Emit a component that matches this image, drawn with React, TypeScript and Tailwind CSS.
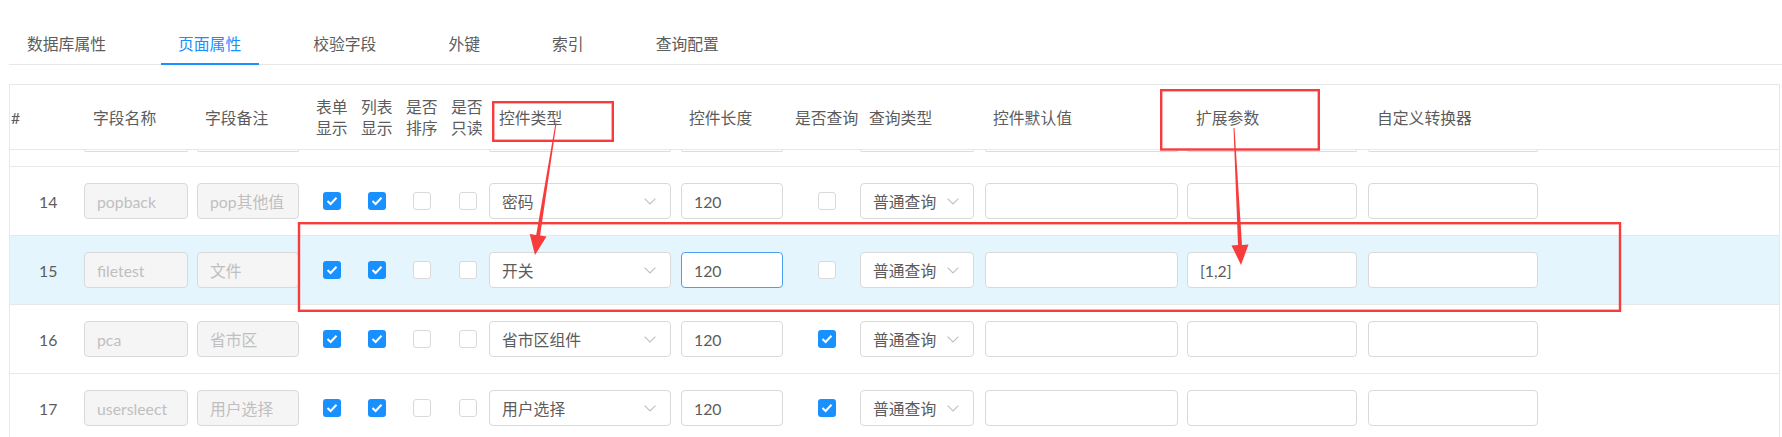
import React from "react";

const W = [
  "w-[69px]",
  "w-[114px]",
  "w-[116px]",
  "w-[45px]",
  "w-[45px]",
  "w-[45px]",
  "w-[40px]",
  "w-[192px]",
  "w-[112px]",
  "w-[67px]",
  "w-[125px]",
  "w-[202px]",
  "w-[181px]",
];

function Check({ on }: { on: boolean }) {
  return on ? (
    <div className="w-[18px] h-[18px] rounded-[3px] bg-[#1890ff] flex items-center justify-center">
      <svg width="12" height="10" viewBox="0 0 12 10">
        <polyline points="1.5,5 4.6,8 10.5,1.8" fill="none" stroke="#fff" strokeWidth="2" />
      </svg>
    </div>
  ) : (
    <div className="w-[18px] h-[18px] rounded-[3px] bg-white border border-[#d9d9d9]" />
  );
}

function Chevron() {
  return (
    <svg width="12" height="7" viewBox="0 0 12 7" className="shrink-0">
      <polyline points="0.6,0.6 6,6 11.4,0.6" fill="none" stroke="#bfbfbf" strokeWidth="1.1" />
    </svg>
  );
}

function Box({
  w,
  text,
  disabled,
  focused,
}: {
  w: string;
  text?: string;
  disabled?: boolean;
  focused?: boolean;
}) {
  const base = "h-[36px] rounded-[4px] border pl-[12px] flex items-center whitespace-nowrap overflow-hidden";
  const look = disabled
    ? "bg-[#f5f5f5] border-[#d9d9d9] text-[#bfbfbf]"
    : focused
    ? "bg-white border-[#4a9ff5] text-[#5c5c5c]"
    : "bg-white border-[#d9d9d9] text-[#5c5c5c]";
  return <div className={`${base} ${look} ${w}`}>{text}</div>;
}

function Select({ w, text }: { w: string; text: string }) {
  return (
    <div className={`h-[36px] rounded-[4px] border border-[#d9d9d9] bg-white pl-[12px] pr-[14px] flex items-center justify-between text-[#5c5c5c] whitespace-nowrap ${w}`}>
      <span>{text}</span>
      <Chevron />
    </div>
  );
}

type RowData = {
  n: number;
  name: string;
  remark: string;
  type: string;
  query: boolean;
  ext?: string;
  focused?: boolean;
  hl?: boolean;
};

function DataRow({ d }: { d: RowData }) {
  return (
    <div className={`flex h-[69px] border-b border-[#e8e8e8] items-center ${d.hl ? "bg-[#e4f5fd]" : "bg-white"}`}>
      <div className={`${W[0]} shrink-0 pl-[29px] text-[#5c5c5c]`}>{d.n}</div>
      <div className={`${W[1]} shrink-0 pl-[5px]`}>
        <Box w="w-[104px]" text={d.name} disabled />
      </div>
      <div className={`${W[2]} shrink-0 pl-[4px]`}>
        <Box w="w-[102px]" text={d.remark} disabled />
      </div>
      <div className={`${W[3]} shrink-0 pl-[14px]`}>
        <Check on />
      </div>
      <div className={`${W[4]} shrink-0 pl-[14px]`}>
        <Check on />
      </div>
      <div className={`${W[5]} shrink-0 pl-[14px]`}>
        <Check on={false} />
      </div>
      <div className={`${W[6]} shrink-0 pl-[15px]`}>
        <Check on={false} />
      </div>
      <div className={`${W[7]} shrink-0 pl-[5px]`}>
        <Select w="w-[182px]" text={d.type} />
      </div>
      <div className={`${W[8]} shrink-0 pl-[5px]`}>
        <Box w="w-[102px]" text="120" focused={d.focused} />
      </div>
      <div className={`${W[9]} shrink-0 pl-[30px]`}>
        <Check on={d.query} />
      </div>
      <div className={`${W[10]} shrink-0 pl-[5px]`}>
        <Select w="w-[114px]" text="普通查询" />
      </div>
      <div className={`${W[11]} shrink-0 pl-[5px]`}>
        <Box w="w-[193px]" />
      </div>
      <div className={`${W[12]} shrink-0 pl-[5px]`}>
        <Box w="w-[170px]" text={d.ext} />
      </div>
      <div className="flex-1 pl-[5px]">
        <Box w="w-[170px]" />
      </div>
    </div>
  );
}

function Peek({ w }: { w: string }) {
  return <div className={`h-[2px] border-b border-x border-[#dcdcdc] rounded-b-[4px] ${w}`} />;
}

function arrow(sx: number, sy: number, tx: number, ty: number) {
  const dx = tx - sx;
  const dy = ty - sy;
  const L = Math.hypot(dx, dy);
  const ux = dx / L;
  const uy = dy / L;
  const nx = -uy;
  const ny = ux;
  const h = 20;
  const bx = tx - ux * h;
  const by = ty - uy * h;
  const pts: [number, number][] = [
    [sx + nx * 0.5, sy + ny * 0.5],
    [bx + nx * 2, by + ny * 2],
    [bx + nx * 8.5, by + ny * 8.5],
    [tx, ty],
    [bx - nx * 8.5, by - ny * 8.5],
    [bx - nx * 2, by - ny * 2],
    [sx - nx * 0.5, sy - ny * 0.5],
  ];
  return pts.map((p) => `${p[0].toFixed(1)},${p[1].toFixed(1)}`).join(" ");
}

const rows: RowData[] = [
  { n: 14, name: "popback", remark: "pop其他值", type: "密码", query: false },
  { n: 15, name: "filetest", remark: "文件", type: "开关", query: false, ext: "[1,2]", focused: true, hl: true },
  { n: 16, name: "pca", remark: "省市区", type: "省市区组件", query: true },
  { n: 17, name: "usersleect", remark: "用户选择", type: "用户选择", query: true },
];

export default function App() {
  const tabs = ["数据库属性", "页面属性", "校验字段", "外键", "索引", "查询配置"];
  return (
    <div
      className="relative w-[1782px] h-[437px] overflow-hidden bg-white text-[15.8px] leading-[21px]"
      style={{ fontFamily: 'Lato, "Noto Sans CJK SC", sans-serif' }}
    >
      {/* tabs */}
      <div className="ml-[9px] h-[65px] flex border-b border-[#e8e8e8] pl-[0.5px]">
        {tabs.map((t, i) => (
          <div
            key={t}
            className={`relative h-[64px] pt-[22px] px-[17.5px] mr-[37px] flex items-center whitespace-nowrap ${
              i === 1 ? "text-[#1890ff]" : "text-[#5c5c5c]"
            }`}
          >
            {t}
            {i === 1 && <div className="absolute left-0 right-0 bottom-[-1px] h-[2.5px] bg-[#1890ff]" />}
          </div>
        ))}
      </div>

      {/* table */}
      <div className="mt-[19px] ml-[9px] w-[1771px] border-l border-t border-r border-[#e8e8e8]">
        {/* header */}
        <div className="flex h-[65px] border-b border-[#e8e8e8] items-center text-[#5c5c5c] whitespace-nowrap">
          <div className={`${W[0]} shrink-0 pl-[1px]`}>#</div>
          <div className={`${W[1]} shrink-0 pl-[14px]`}>字段名称</div>
          <div className={`${W[2]} shrink-0 pl-[12px]`}>字段备注</div>
          <div className={`${W[3]} shrink-0 pl-[7px]`}>
            表单
            <br />
            显示
          </div>
          <div className={`${W[4]} shrink-0 pl-[7px]`}>
            列表
            <br />
            显示
          </div>
          <div className={`${W[5]} shrink-0 pl-[7px]`}>
            是否
            <br />
            排序
          </div>
          <div className={`${W[6]} shrink-0 pl-[7px]`}>
            是否
            <br />
            只读
          </div>
          <div className={`${W[7]} shrink-0 pl-[15px]`}>控件类型</div>
          <div className={`${W[8]} shrink-0 pl-[13px]`}>控件长度</div>
          <div className={`${W[9]} shrink-0 pl-[7px]`}>是否查询</div>
          <div className={`${W[10]} shrink-0 pl-[14px]`}>查询类型</div>
          <div className={`${W[11]} shrink-0 pl-[13px]`}>控件默认值</div>
          <div className={`${W[12]} shrink-0 pl-[14px]`}>扩展参数</div>
          <div className="flex-1 pl-[14px]">自定义转换器</div>
        </div>

        {/* row 13 scrolled under header */}
        <div className="flex h-[17px] border-b border-[#e8e8e8] items-start">
          <div className={`${W[0]} shrink-0`} />
          <div className={`${W[1]} shrink-0 pl-[5px]`}>
            <Peek w="w-[104px]" />
          </div>
          <div className={`${W[2]} shrink-0 pl-[4px]`}>
            <Peek w="w-[102px]" />
          </div>
          <div className={`${W[3]} shrink-0`} />
          <div className={`${W[4]} shrink-0`} />
          <div className={`${W[5]} shrink-0`} />
          <div className={`${W[6]} shrink-0`} />
          <div className={`${W[7]} shrink-0 pl-[5px]`}>
            <Peek w="w-[182px]" />
          </div>
          <div className={`${W[8]} shrink-0 pl-[5px]`}>
            <Peek w="w-[102px]" />
          </div>
          <div className={`${W[9]} shrink-0`} />
          <div className={`${W[10]} shrink-0 pl-[5px]`}>
            <Peek w="w-[114px]" />
          </div>
          <div className={`${W[11]} shrink-0 pl-[5px]`}>
            <Peek w="w-[193px]" />
          </div>
          <div className={`${W[12]} shrink-0 pl-[5px]`}>
            <Peek w="w-[170px]" />
          </div>
          <div className="flex-1 pl-[5px]">
            <Peek w="w-[170px]" />
          </div>
        </div>

        {rows.map((d) => (
          <DataRow key={d.n} d={d} />
        ))}
      </div>

      {/* annotations */}
      <svg className="absolute inset-0 pointer-events-none" width="1782" height="437" viewBox="0 0 1782 437">
        <rect x="493.2" y="102.2" width="119.6" height="38.6" fill="none" stroke="#f83c3c" strokeWidth="2.4" />
        <rect x="1161.2" y="90.2" width="157.6" height="59.3" fill="none" stroke="#f83c3c" strokeWidth="2.4" />
        <rect x="299" y="223.2" width="1321" height="87.6" fill="none" stroke="#f83c3c" strokeWidth="2.4" />
        <polygon points={arrow(556, 123, 535, 255)} fill="#f83c3c" />
        <polygon points={arrow(1234, 128, 1241, 265)} fill="#f83c3c" />
      </svg>
    </div>
  );
}
